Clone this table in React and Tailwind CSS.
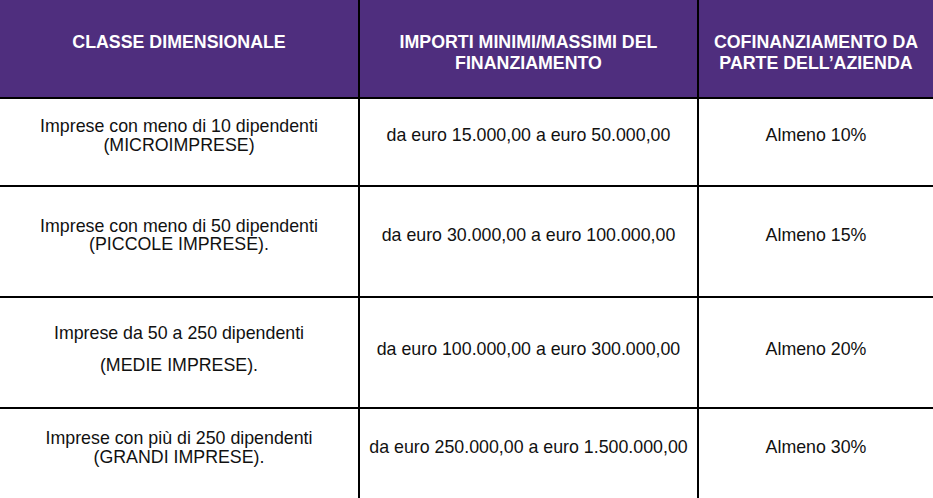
import React from "react";

const rows = [
  {
    h: "h-[88px]",
    pb: "pb-[13px]",
    border: true,
    c1: ["Imprese con meno di 10 dipendenti", "(MICROIMPRESE)"],
    gap: false,
    c2: "da euro 15.000,00 a euro 50.000,00",
    c3: "Almeno 10%",
  },
  {
    h: "h-[111px]",
    pb: "pb-[13px]",
    border: true,
    c1: ["Imprese con meno di 50 dipendenti", "(PICCOLE IMPRESE)."],
    gap: false,
    c2: "da euro 30.000,00 a euro 100.000,00",
    c3: "Almeno 15%",
  },
  {
    h: "h-[111px]",
    pb: "pb-[7px]",
    border: true,
    c1: ["Imprese da 50 a 250 dipendenti", "(MEDIE IMPRESE)."],
    gap: true,
    c2: "da euro 100.000,00 a euro 300.000,00",
    c3: "Almeno 20%",
  },
  {
    h: "h-[89px]",
    pb: "pb-[12px]",
    border: false,
    c1: ["Imprese con più di 250 dipendenti", "(GRANDI IMPRESE)."],
    gap: false,
    c2: "da euro 250.000,00 a euro 1.500.000,00",
    c3: "Almeno 30%",
  },
];

export default function App() {
  return (
    <div
      className="w-[933px] h-[498px] overflow-hidden bg-white text-[#111111] text-[17.8px]"
      style={{ fontFamily: '"Liberation Sans", Arial, sans-serif' }}
    >
      {/* Header */}
      <div className="grid grid-cols-[360px_339px_234px] h-[99px] bg-[#4f2e7e] border-b-2 border-black text-white font-bold leading-[21px] text-center">
        <div className="border-r-2 border-black pt-[32px]">CLASSE DIMENSIONALE</div>
        <div className="border-r-2 border-black pt-[32px]">
          IMPORTI MINIMI/MASSIMI DEL
          <br />
          FINANZIAMENTO
        </div>
        <div className="pt-[32px]">
          COFINANZIAMENTO DA
          <br />
          PARTE DELL’AZIENDA
        </div>
      </div>

      {rows.map((r, i) => (
        <div
          key={i}
          className={`grid grid-cols-[360px_339px_234px] ${r.h} ${
            r.border ? "border-b-2 border-black" : ""
          } text-center leading-[18.5px]`}
        >
          <div className={`border-r-2 border-black flex flex-col items-center justify-center ${r.pb} ${r.gap ? "gap-[14px]" : ""}`}>
            <div>{r.c1[0]}</div>
            <div>{r.c1[1]}</div>
          </div>
          <div className={`border-r-2 border-black flex items-center justify-center ${r.pb}`}>
            {r.c2}
          </div>
          <div className={`flex items-center justify-center ${r.pb}`}>{r.c3}</div>
        </div>
      ))}
    </div>
  );
}
